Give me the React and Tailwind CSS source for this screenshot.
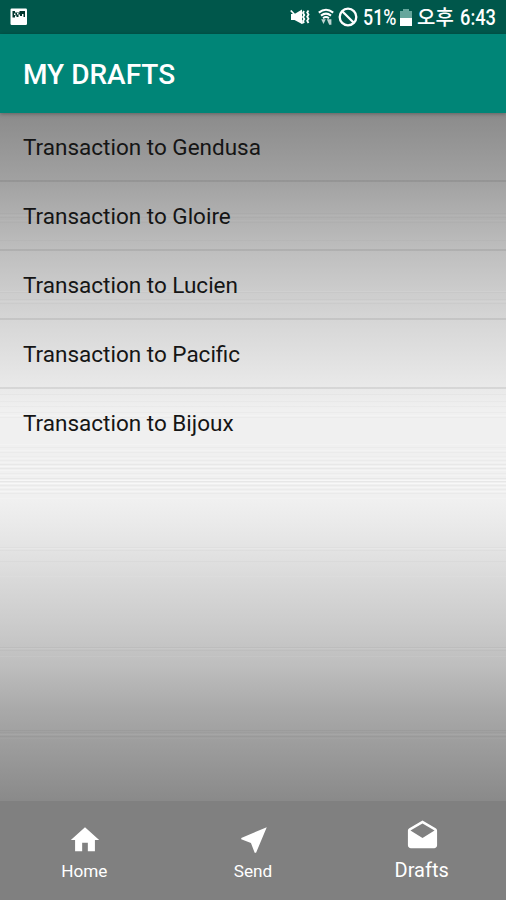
import { MdHome, MdNearMe, MdDrafts } from 'react-icons/md';

const drafts = ['Gendusa', 'Gloire', 'Lucien', 'Pacific', 'Bijoux'];

// faint brushed-metal lines over the list background: [y, opacity]
const darkLines = [
  [101, 0.03], [105, 0.03], [110, 0.02], [128, 0.03],
  [180, 0.03], [187, 0.03], [191, 0.03],
  [282, 0.04], [289, 0.03], [294, 0.03], [300, 0.03], [305, 0.03],
  [335, 0.03], [340, 0.03], [344, 0.02], [348, 0.03], [352, 0.05], [356, 0.05], [361, 0.03],
  [366, 0.06], [369, 0.06], [373, 0.04], [377, 0.03], [381, 0.04],
  [435, 0.03], [438, 0.03], [449, 0.03],
  [535, 0.05], [538, 0.04], [618, 0.05], [620, 0.04], [624, 0.06],
];
const lightLines = [
  [103, 0.06], [108, 0.06], [179, 0.12], [189, 0.12],
  [303, 0.3], [332, 0.3], [338, 0.3], [346, 0.35], [350, 0.3], [354, 0.6], [358, 0.4], [363, 0.3],
  [368, 0.7], [371, 0.8], [375, 0.5], [379, 0.5], [386, 0.2],
  [436, 0.2], [464, 0.1], [536, 0.1], [544, 0.1], [622, 0.08], [626, 0.05],
];

function Texture() {
  return (
    <svg className="absolute inset-0 h-full w-full" viewBox="0 0 506 688" preserveAspectRatio="none" shapeRendering="crispEdges">
      {darkLines.map(([y, o]) => (
        <rect key={y} x="0" y={y - 1} width="506" height="1" fill="#000" opacity={o * 0.6} />
      ))}
      {lightLines.map(([y, o]) => (
        <rect key={y} x="0" y={y - 1} width="506" height="1" fill="#fff" opacity={o * 0.7} />
      ))}
    </svg>
  );
}

function StatusBar() {
  return (
    <div className="flex h-[34px] items-center bg-[#00574b] pl-[10px] pr-[11px] font-medium text-white">
      <svg width="18" height="18" viewBox="0 0 18 18">
        <rect x="0.5" y="0.5" width="16.5" height="16.5" rx="1.2" fill="#fff" />
        <path d="M2.5 3H5v1.5h4.5V3H15v6h-1.5V6H12v2h-2V6.5H8.5V9H6.5V7.5H5V9.5H2.5z" fill="#00352d" />
        <path d="M4 5.5h1.5V7H4zM7 5h1.5v1.5H7z" fill="#fff" />
      </svg>

      <div className="ml-auto flex items-center">
        <svg width="21" height="20" viewBox="0 0 21 20" fill="none" stroke="#fff">
          <path d="M1 7h3.5L12 2.5v14.5L4.5 13H1z" fill="#fff" stroke="none" />
          <path d="M0.8 3.5l12 13" strokeWidth="1.8" />
          <path d="M14 4l-1 2 1.3 2-1.3 2 1.3 2-1.3 2 1 2M18.5 3.5l-1.3 2 1.3 2-1.3 2.2 1.3 2-1.3 2 1.3 2.3" strokeWidth="1.8" />
        </svg>
        <svg className="ml-[7px]" width="16" height="18" viewBox="0 0 16 18" fill="none" stroke="#fff">
          <path d="M0.8 4.6q7.2-5.6 14.4 0M3 7.6q5-4 10 0" strokeWidth="2" />
          <path d="M5 10.2q3-2.4 6 0" strokeWidth="1.8" />
          <path d="M3.2 11.2h4.6l-2.3 4.8zM8.8 11.2h4.6v5.6h-2.2z" fill="#fff" stroke="none" opacity="0.75" />
        </svg>
        <svg className="ml-[4px]" width="20" height="20" viewBox="0 0 20 20" fill="none" stroke="#fff" strokeWidth="2.3">
          <circle cx="10" cy="10" r="8.3" />
          <path d="M4.2 4.2l11.6 11.6" />
        </svg>
        <span className="ml-[5px] mt-px w-[35px] origin-left scale-x-[0.83] whitespace-nowrap text-[21.5px] leading-none">51%</span>
        <div className="ml-[2px] mt-px flex h-[17px] w-[12px] flex-col items-center">
          <div className="h-[2px] w-[6px] bg-[#66a69c]" />
          <div className="h-[7px] w-full bg-[#66a69c]" />
          <div className="h-[8px] w-full bg-white" />
        </div>
        <span className="ml-[5px] w-[38px] whitespace-nowrap font-['Noto_Sans_CJK_KR',sans-serif] text-[20px] leading-none">오후</span>
        <span className="ml-[5px] mt-px w-[35px] origin-left scale-x-[0.85] whitespace-nowrap text-[21.5px] leading-none">6:43</span>
      </div>
    </div>
  );
}

function NavItem({ icon, label, active }) {
  return (
    <div className={`flex flex-1 flex-col items-center ${active ? 'pt-[18px]' : 'pt-[22px]'}`}>
      <div className="pl-[2px]">{icon}</div>
      <span className={active ? 'mt-[4px] text-[20px] leading-[24px]' : 'mt-[4px] text-[17.2px] leading-[20px]'}>
        {label}
      </span>
    </div>
  );
}

function App() {
  return (
    <div className="flex h-[900px] w-[506px] flex-col overflow-hidden font-[Roboto,'Noto_Sans_CJK_KR',sans-serif]">
      <StatusBar />

      <header className="relative z-10 flex h-[79px] items-center bg-[#008577] pl-[23px] pt-[3px] shadow-[0_1px_4px_rgba(0,0,0,0.3)]">
        <h1 className="text-[28px] font-medium leading-none text-white">MY DRAFTS</h1>
      </header>

      <main className="relative grow bg-[linear-gradient(to_bottom,#8b8b8b_0px,#a1a1a1_67px,#bebebe_137px,#d6d6d6_207px,#eaeaea_277px,#f0f0f0_297px,#f0f0f0_387px,#ebebeb_407px,#e3e3e3_437px,#d9d9d9_467px,#cdcdcd_507px,#bebebe_552px,#a9a9a9_597px,#a0a0a0_622px,#8a8a8a_687px)]">
        <Texture />
        <ul className="relative">
          {drafts.map((name) => (
            <li
              key={name}
              className="flex h-[69px] items-center border-b-2 border-black/8 pl-[23px] pt-[2px] text-[22.5px] leading-none text-[#151515] last:border-0 last:pt-0"
            >
              Transaction to {name}
            </li>
          ))}
        </ul>
      </main>

      <nav className="flex h-[99px] bg-[#808080] text-white">
        <NavItem icon={<MdHome size={34} />} label="Home" />
        <NavItem icon={<MdNearMe size={34} />} label="Send" />
        <NavItem icon={<MdDrafts size={35} />} label="Drafts" active />
      </nav>
    </div>
  );
}

export default App;
